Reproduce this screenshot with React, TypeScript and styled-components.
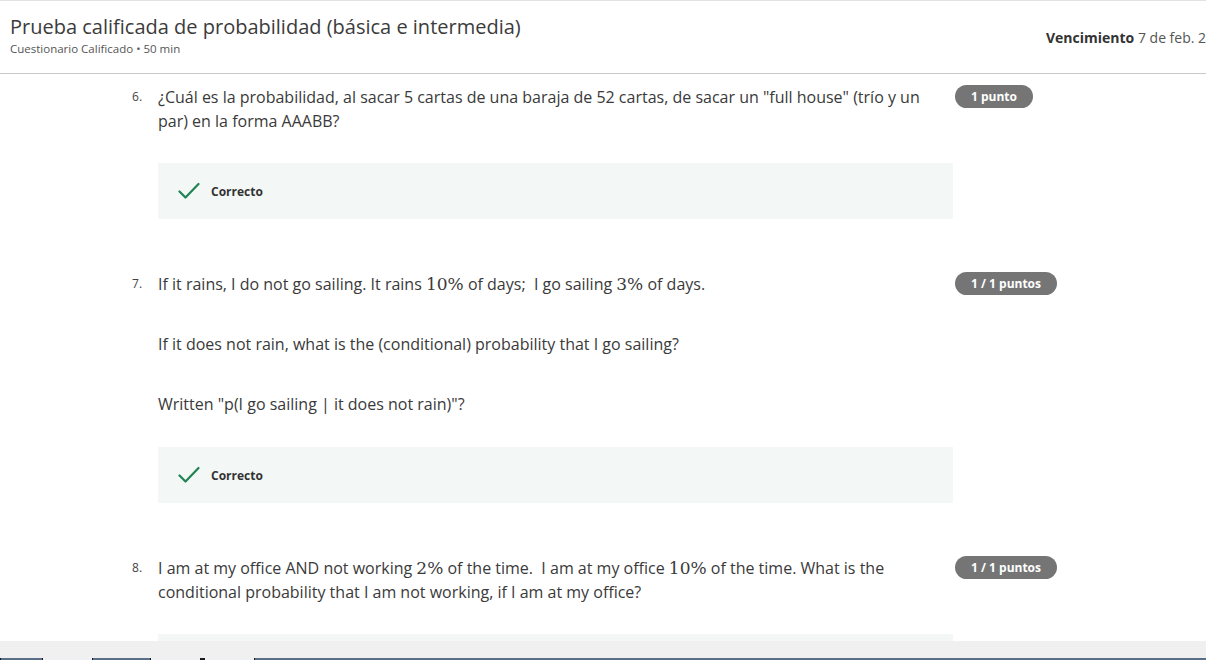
import React from "react";
import styled, { createGlobalStyle } from "styled-components";

const GlobalStyle = createGlobalStyle`
  html, body {
    margin: 0;
    padding: 0;
    background: #ffffff;
  }
  body {
    font-family: "Open Sans", "Noto Sans", sans-serif;
    color: #373a3c;
    overflow: hidden;
  }
  * {
    box-sizing: border-box;
  }
`;

interface IQuestion {
  num: number;
  badge: string;
  paragraphs: React.ReactNode[];
  correct: boolean;
}

const M = (props: { children: React.ReactNode }) => <MathText>{props.children}</MathText>;

const questions: IQuestion[] = [
  {
    num: 6,
    badge: "1 punto",
    paragraphs: [
      <>¿Cuál es la probabilidad, al sacar 5 cartas de una baraja de 52 cartas, de sacar un "full house" (trío y un par) en la forma AAABB?</>
    ],
    correct: true
  },
  {
    num: 7,
    badge: "1 / 1 puntos",
    paragraphs: [
      <>
        If it rains, I do not go sailing. It rains <M>10%</M> of days;&nbsp; I go sailing <M>3%</M> of days.
      </>,
      <>If it does not rain, what is the (conditional) probability that I go sailing?</>,
      <>Written "p(I go sailing | it does not rain)"?</>
    ],
    correct: true
  },
  {
    num: 8,
    badge: "1 / 1 puntos",
    paragraphs: [
      <>
        I am at my office AND not working <M>2%</M> of the time.&nbsp; I am at my office <M>10%</M> of the time. What is the conditional probability that I am not working, if I am at my office?
      </>
    ],
    correct: true
  }
];

function CheckIcon() {
  return (
    <svg width="22" height="18" viewBox="0 0 22 18">
      <polyline points="1.5,9.5 7.5,15.5 20.5,2" fill="none" stroke="#1f8354" strokeWidth="2.2" strokeLinecap="round" strokeLinejoin="round" />
    </svg>
  );
}

export default function App() {
  return (
    <Page>
      <GlobalStyle />
      <Header>
        <TitleBlock>
          <Title>Prueba calificada de probabilidad (básica e intermedia)</Title>
          <Subtitle>Cuestionario Calificado • 50 min</Subtitle>
        </TitleBlock>
        <Due>
          <b>Vencimiento</b> 7 de feb. 23:59 CST
        </Due>
      </Header>
      <Content>
        {questions.map((q) => (
          <QuestionRow key={q.num}>
            <Number>{q.num}.</Number>
            <Body>
              {q.paragraphs.map((p, i) => (
                <Paragraph key={i}>{p}</Paragraph>
              ))}
              {q.correct && (
                <Feedback>
                  <CheckIcon />
                  <FeedbackText>Correcto</FeedbackText>
                </Feedback>
              )}
            </Body>
            <BadgeCell>
              <Badge>{q.badge}</Badge>
            </BadgeCell>
          </QuestionRow>
        ))}
      </Content>
      <BottomStrip />
      <TaskBar>
        <Seg tone="blue" w={42} />
        <Seg tone="light" w={50} />
        <Seg tone="blue" w={58} />
        <Seg tone="light" w={50} />
        <Seg tone="dark" w={4} />
        <Seg tone="light" w={50} />
        <Seg tone="blue" w={952} />
      </TaskBar>
    </Page>
  );
}

const Page = styled.div`
  width: 1206px;
  height: 660px;
  display: flex;
  flex-direction: column;
  overflow: hidden;
`;

const Header = styled.header`
  height: 74px;
  flex-shrink: 0;
  border-top: 1px solid #e2e2e2;
  border-bottom: 1px solid #c8c8c8;
  display: flex;
  align-items: center;
  justify-content: space-between;
  padding-left: 10px;
`;

const TitleBlock = styled.div`
  display: flex;
  flex-direction: column;
  padding-bottom: 4px;
`;

const Title = styled.h1`
  margin: 0;
  font-size: 20px;
  font-weight: 400;
  line-height: 26px;
  color: #3b3b3b;
`;

const Subtitle = styled.div`
  font-size: 11.5px;
  line-height: 15px;
  color: #555;
  margin-top: 1px;
`;

const Due = styled.div`
  width: 160px;
  flex-shrink: 0;
  white-space: nowrap;
  overflow: hidden;
  font-size: 14px;
  color: #555;

  b {
    font-weight: 700;
    color: #333;
  }
`;

const Content = styled.main`
  flex: 1;
  overflow: hidden;
  padding-top: 11px;
`;

const QuestionRow = styled.section`
  display: grid;
  grid-template-columns: 26px 797px auto;
  padding-left: 132px;
  margin-bottom: 53px;
`;

const Number = styled.div`
  font-size: 12px;
  line-height: 24px;
  color: #444;
`;

const Body = styled.div`
  display: flex;
  flex-direction: column;
  width: 795px;
`;

const Paragraph = styled.p`
  margin: 0 0 36px;
  font-size: 16px;
  line-height: 24px;
  color: #3a3a3a;
  padding-right: 30px;

  &:last-of-type {
    margin-bottom: 30px;
  }
  & + &:last-of-type {
    margin-bottom: 31px;
  }
`;

const MathText = styled.span`
  font-family: "DejaVu Serif", "Liberation Serif", serif;
  font-size: 17px;
  line-height: 1;
`;

const Feedback = styled.div`
  height: 56px;
  background: #f3f8f6;
  display: flex;
  align-items: center;
  gap: 11px;
  padding-left: 20px;
`;

const FeedbackText = styled.span`
  font-size: 12px;
  font-weight: 700;
  color: #333;
`;

const BadgeCell = styled.div`
  display: flex;
  align-items: flex-start;
`;

const Badge = styled.span`
  display: inline-flex;
  align-items: center;
  height: 23px;
  padding: 0 16px;
  border-radius: 12px;
  background: #757575;
  color: #fff;
  font-size: 12px;
  font-weight: 700;
  white-space: nowrap;
`;

const BottomStrip = styled.div`
  height: 17px;
  flex-shrink: 0;
  background: #f0f0f0;
`;

const TaskBar = styled.div`
  height: 2px;
  flex-shrink: 0;
  display: flex;
  background: #2b3a4f;
`;

const Seg = styled.div<{ tone: "blue" | "light" | "dark"; w: number }>`
  width: ${(p) => p.w}px;
  flex-shrink: 0;
  border-left: 1px solid #1a1a1a;
  background: ${(p) => (p.tone === "blue" ? "#5b6e88" : p.tone === "light" ? "#eef0f3" : "#1a1a1a")};
`;
